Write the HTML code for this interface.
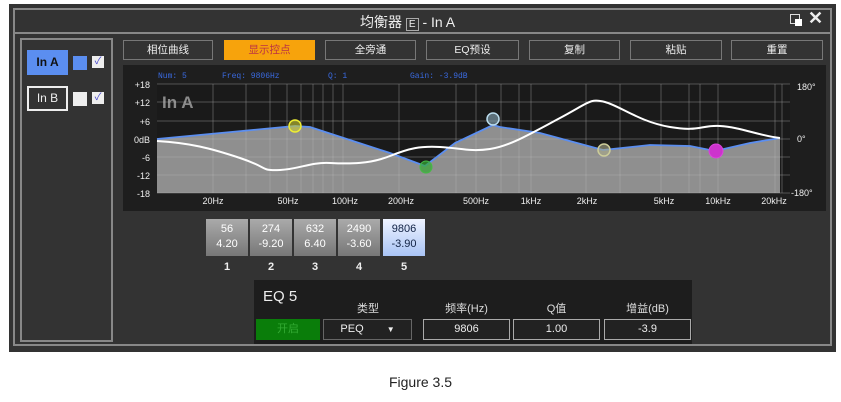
<!DOCTYPE html>
<html><head><meta charset="utf-8"><style>
*{margin:0;padding:0;box-sizing:border-box}
body{width:841px;height:402px;background:#fff;position:relative;overflow:hidden;font-family:"Liberation Sans","Noto Sans CJK SC",sans-serif}
.a{position:absolute}
.btn{position:absolute;top:40px;height:20px;border:1px solid #777;background:#333;color:#eee;font-size:10.5px;text-align:center;line-height:18px}
.band{position:absolute;top:219px;width:42px;height:37px;background:linear-gradient(#aaa,#777);color:#fff;font-size:11px;text-align:center;line-height:15px;padding-top:3px}
.num{position:absolute;top:261px;width:42px;text-align:center;color:#eee;font-size:11px;font-weight:bold}
.fld{position:absolute;top:319px;height:21px;border:1px solid #aaa;background:#222;color:#eee;font-size:11px;text-align:center;line-height:19px}
.lbl{position:absolute;top:300px;color:#ddd;font-size:11px;text-align:center}
</style></head><body>
<div class="a" style="left:9px;top:4px;width:827px;height:348px;background:#333"></div>
<div class="a" style="left:13px;top:8px;width:819px;height:338px;border:2px solid #888"></div>
<div class="a" style="left:15px;top:32px;width:815px;height:2px;background:#888"></div>
<div class="a" style="left:360px;top:12px;color:#eee;font-size:14px">均衡器 <span style="border:1px solid #aaa;font-size:10px;padding:0 2px">E</span> - In A</div>
<div class="a" style="left:790px;top:14px;width:10px;height:10px;border:1.5px solid #ddd"></div>
<div class="a" style="left:795px;top:19px;width:7px;height:7px;background:#fff"></div>
<div class="a" style="left:808px;top:8px;color:#eee;font-size:18px;font-weight:bold">✕</div>
<div class="a" style="left:20px;top:38px;width:93px;height:304px;border:2px solid #888"></div>
<div class="a" style="left:27px;top:50px;width:41px;height:25px;background:#5b8ef0;color:#111;font-size:12px;font-weight:bold;text-align:center;line-height:25px">In A</div>
<div class="a" style="left:73px;top:56px;width:14px;height:14px;background:#5b8ef0"></div>
<div class="a" style="left:92px;top:56px;width:12px;height:12px;background:#eee;color:#44c;font-size:10px;line-height:12px;text-align:center">✓</div>
<div class="a" style="left:27px;top:86px;width:41px;height:25px;border:2px solid #eee;color:#eee;font-size:12px;text-align:center;line-height:21px">In B</div>
<div class="a" style="left:73px;top:92px;width:14px;height:14px;background:#eee"></div>
<div class="a" style="left:92px;top:92px;width:12px;height:12px;background:#eee;color:#44c;font-size:10px;line-height:12px;text-align:center">✓</div>
<div class="btn" style="left:123px;width:90px">相位曲线</div>
<div class="btn" style="left:224px;width:91px;background:#f7a30c;border-color:#f7a30c;color:#b34">显示控点</div>
<div class="btn" style="left:325px;width:91px">全旁通</div>
<div class="btn" style="left:426px;width:93px">EQ预设</div>
<div class="btn" style="left:529px;width:91px">复制</div>
<div class="btn" style="left:630px;width:92px">粘贴</div>
<div class="btn" style="left:731px;width:92px">重置</div>
<svg class="a" style="left:0;top:0" width="841" height="402">
<rect x="123" y="65" width="703" height="146" fill="#1e1e1e"/>
<g font-family="Liberation Mono,monospace" font-size="8" fill="#3a6ae0"><text x="158" y="78">Num:  5</text><text x="222" y="78">Freq:  9806Hz</text><text x="328" y="78">Q:  1</text><text x="410" y="78">Gain:  -3.9dB</text></g>
<rect x="157" y="84" width="633" height="109" fill="#1a1a1a"/>
<path d="M157,139 L295,126 L310,127 L390,153 L425,166 L455,143 L493,125 L500,127 L540,133 L603,150 L650,145 L690,146 L715,151 L750,143 L780,138 L780,193 L157,193 Z" fill="#8f8f8f"/>
<g stroke="#bbb" stroke-opacity="0.35" stroke-width="1">
<line x1="157" y1="84" x2="790" y2="84"/><line x1="157" y1="102" x2="790" y2="102"/><line x1="157" y1="121" x2="790" y2="121"/><line x1="157" y1="139" x2="790" y2="139"/><line x1="157" y1="157" x2="790" y2="157"/><line x1="157" y1="175" x2="790" y2="175"/><line x1="157" y1="193" x2="790" y2="193"/>
<line x1="213" y1="84" x2="213" y2="193"/><line x1="246" y1="84" x2="246" y2="193"/><line x1="270" y1="84" x2="270" y2="193"/><line x1="287" y1="84" x2="287" y2="193"/><line x1="301" y1="84" x2="301" y2="193"/><line x1="313" y1="84" x2="313" y2="193"/><line x1="323" y1="84" x2="323" y2="193"/><line x1="333" y1="84" x2="333" y2="193"/><line x1="343" y1="84" x2="343" y2="193"/><line x1="399" y1="84" x2="399" y2="193"/><line x1="456" y1="84" x2="456" y2="193"/><line x1="476" y1="84" x2="476" y2="193"/><line x1="501" y1="84" x2="501" y2="193"/><line x1="519" y1="84" x2="519" y2="193"/><line x1="531" y1="84" x2="531" y2="193"/><line x1="586" y1="84" x2="586" y2="193"/><line x1="620" y1="84" x2="620" y2="193"/><line x1="661" y1="84" x2="661" y2="193"/><line x1="689" y1="84" x2="689" y2="193"/><line x1="700" y1="84" x2="700" y2="193"/><line x1="718" y1="84" x2="718" y2="193"/><line x1="775" y1="84" x2="775" y2="193"/><line x1="782" y1="84" x2="782" y2="193"/>
</g>
<path d="M157,139 L295,126 L310,127 L390,153 L425,166 L455,143 L493,125 L500,127 L540,133 L603,150 L650,145 L690,146 L715,151 L750,143 L780,138" fill="none" stroke="#5b8ef0" stroke-width="1.8"/>
<path d="M157,141 C190,143 210,148 240,158 S260,171 280,170 S310,162 330,163 S370,164 390,156 S420,146 440,147 S470,152 490,149 S530,134 560,118 S590,98 605,102 S640,122 670,127 S700,125 720,126 S760,136 780,138" fill="none" stroke="#fff" stroke-width="2"/>
<text x="162" y="108" font-size="17" font-weight="bold" fill="#bbb" fill-opacity="0.7">In A</text>
<circle cx="295" cy="126" r="6" fill="#cc3" fill-opacity="0.6" stroke="#ee3" stroke-width="1.5"/>
<circle cx="426" cy="167" r="6" fill="#3a3" fill-opacity="0.7" stroke="#4b4"/>
<circle cx="493" cy="119" r="6" fill="#8ab" fill-opacity="0.6" stroke="#bde" stroke-width="1.5"/>
<circle cx="604" cy="150" r="6" fill="#aa8" fill-opacity="0.6" stroke="#cc9" stroke-width="1.5"/>
<circle cx="716" cy="151" r="7" fill="#c3c" stroke="#d4d"/>
<g font-size="9" fill="#eee" text-anchor="end"><text x="150" y="88">+18</text><text x="150" y="106">+12</text><text x="150" y="125">+6</text><text x="150" y="143">0dB</text><text x="150" y="161">-6</text><text x="150" y="179">-12</text><text x="150" y="197">-18</text></g>
<g font-size="9" fill="#eee"><text x="797" y="90">180°</text><text x="797" y="142">0°</text><text x="791" y="196">-180°</text></g>
<g font-size="9" fill="#eee" text-anchor="middle"><text x="213" y="204">20Hz</text><text x="288" y="204">50Hz</text><text x="345" y="204">100Hz</text><text x="401" y="204">200Hz</text><text x="476" y="204">500Hz</text><text x="531" y="204">1kHz</text><text x="587" y="204">2kHz</text><text x="664" y="204">5kHz</text><text x="718" y="204">10kHz</text><text x="774" y="204">20kHz</text></g>
</svg>
<div class="band" style="left:206px">56<br>4.20</div>
<div class="band" style="left:250px">274<br>-9.20</div>
<div class="band" style="left:294px">632<br>6.40</div>
<div class="band" style="left:338px">2490<br>-3.60</div>
<div class="band" style="left:383px;background:linear-gradient(#eef3ff,#a9c4f5);color:#124">9806<br>-3.90</div>
<div class="num" style="left:206px">1</div><div class="num" style="left:250px">2</div><div class="num" style="left:294px">3</div><div class="num" style="left:338px">4</div><div class="num" style="left:383px">5</div>
<div class="a" style="left:254px;top:280px;width:438px;height:64px;background:#1d1d1d"></div>
<div class="a" style="left:263px;top:288px;color:#eee;font-size:15px">EQ 5</div>
<div class="a" style="left:256px;top:319px;width:64px;height:21px;background:#0a7d0a;color:#3a3;font-size:11px;text-align:center;line-height:21px">开启</div>
<div class="lbl" style="left:323px;width:90px">类型</div>
<div class="lbl" style="left:423px;width:87px">频率(Hz)</div>
<div class="lbl" style="left:513px;width:87px">Q值</div>
<div class="lbl" style="left:604px;width:87px">增益(dB)</div>
<div class="fld" style="left:323px;width:89px;border-color:#666">PEQ <span style="font-size:8px;margin-left:20px">▼</span></div>
<div class="fld" style="left:423px;width:87px">9806</div>
<div class="fld" style="left:513px;width:87px">1.00</div>
<div class="fld" style="left:604px;width:87px">-3.9</div>
<div class="a" style="left:0;top:374px;width:841px;text-align:center;font-size:14px;color:#222">Figure 3.5</div>
</body></html>
